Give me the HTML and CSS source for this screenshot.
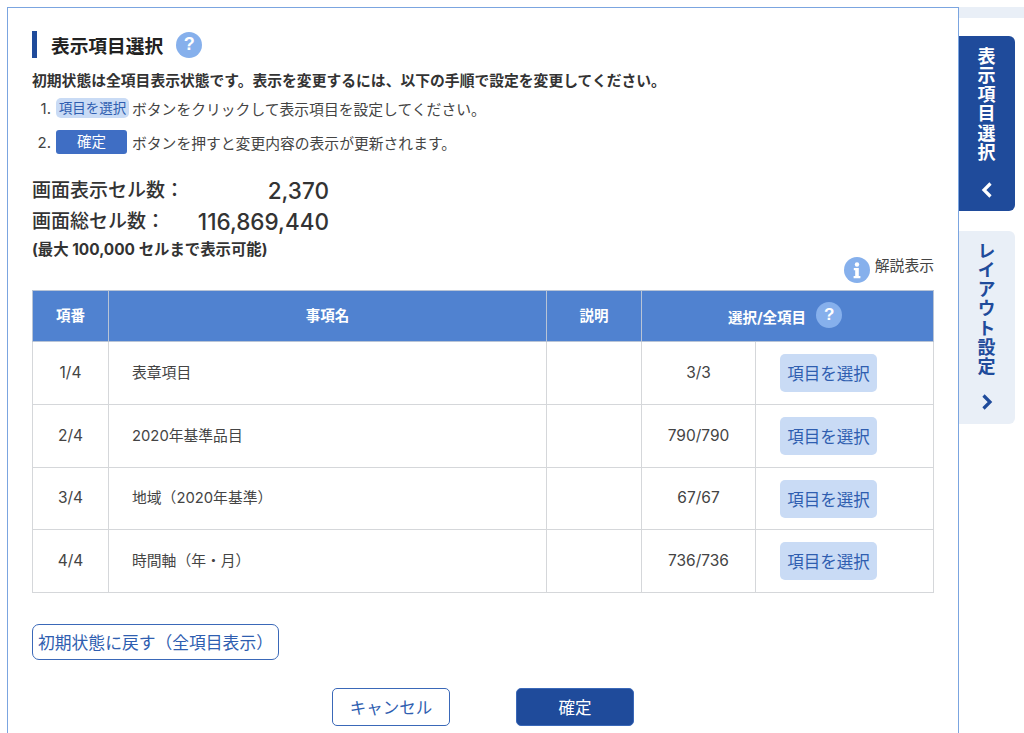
FILE: index.html
```html
<!DOCTYPE html>
<html lang="ja">
    <head>
        <meta charset="utf-8">
        <title>表示項目選択</title>
        <link rel="stylesheet" href="styles.css">
    </head>
    <body>
        <div class="page">
            <main class="panel">
                <div class="title-row">
                    <h1 class="title">表示項目選択</h1>
                    <span class="help help-big">?</span>
                </div>
                <p class="lead">初期状態は全項目表示状態です。表示を変更するには、以下の手順で設定を変更してください。</p>
                <div class="step step-one">
                    <span class="step-no">1.</span>
                    <span class="chip">項目を選択</span>
                    <span>ボタンをクリックして表示項目を設定してください。</span>
                </div>
                <div class="step step-two">
                    <span class="step-no">2.</span>
                    <span class="chip-dark">確定</span>
                    <span>ボタンを押すと変更内容の表示が更新されます。</span>
                </div>

                <div class="count-row count-first">
                    <span class="count-label">画面表示セル数：</span>
                    <span class="count-value">2,370</span>
                </div>
                <div class="count-row">
                    <span class="count-label">画面総セル数：</span>
                    <span class="count-value">116,869,440</span>
                </div>
                <p class="limit">(最大 100,000 セルまで表示可能)</p>

                <div class="guide">
                    <svg class="guide-icon" viewBox="0 0 26 26" width="26" height="26">
                        <circle cx="13" cy="13" r="13" fill="#86b0ec"/>
                        <circle cx="13" cy="7.500" r="2.200" fill="#fff"/>
                        <path d="M9.800 11h5v8h1.600v2.200H9.600V19h1.600v-5.800H9.800z" fill="#fff"/>
                    </svg>
                    <span class="guide-text">解説表示</span>
                </div>

                <table class="items">
                    <colgroup>
                        <col class="col-no">
                        <col class="col-name">
                        <col class="col-desc">
                        <col class="col-count">
                        <col class="col-btn">
                    </colgroup>
                    <thead>
                        <tr>
                            <th>項番</th>
                            <th>事項名</th>
                            <th>説明</th>
                            <th colspan="2">
                                <span class="th-inner">選択/全項目 <span class="help help-th">?</span></span>
                            </th>
                        </tr>
                    </thead>
                    <tbody>
                        <tr>
                            <td class="center">1/4</td>
                            <td class="name">表章項目</td>
                            <td></td>
                            <td class="center">3/3</td>
                            <td class="btn-cell"><button class="pick">項目を選択</button></td>
                        </tr>
                        <tr>
                            <td class="center">2/4</td>
                            <td class="name">2020年基準品目</td>
                            <td></td>
                            <td class="center">790/790</td>
                            <td class="btn-cell"><button class="pick">項目を選択</button></td>
                        </tr>
                        <tr class="row-short">
                            <td class="center">3/4</td>
                            <td class="name">地域（2020年基準）</td>
                            <td></td>
                            <td class="center">67/67</td>
                            <td class="btn-cell"><button class="pick">項目を選択</button></td>
                        </tr>
                        <tr>
                            <td class="center">4/4</td>
                            <td class="name">時間軸（年・月）</td>
                            <td></td>
                            <td class="center">736/736</td>
                            <td class="btn-cell"><button class="pick">項目を選択</button></td>
                        </tr>
                    </tbody>
                </table>

                <button class="reset">初期状態に戻す（全項目表示）</button>

                <div class="actions">
                    <button class="cancel">キャンセル</button>
                    <button class="ok">確定</button>
                </div>
            </main>

            <aside class="side">
                <div class="side-strip"></div>
                <div class="tab tab-on">
                    <span class="tab-text">表示項目選択</span>
                    <svg viewBox="0 0 14 18" width="14" height="18">
                        <path d="M10.500 2.500 4 9l6.500 6.500" fill="none" stroke="#fff" stroke-width="3.200"/>
                    </svg>
                </div>
                <div class="tab tab-off">
                    <span class="tab-text">レイアウト設定</span>
                    <svg viewBox="0 0 14 18" width="14" height="18">
                        <path d="M3.500 2.500 10 9l-6.500 6.500" fill="none" stroke="#1f4b9b" stroke-width="3.200"/>
                    </svg>
                </div>
            </aside>
        </div>
    </body>
</html>
```

FILE: styles.css
```css
html, body {
    margin: 0;
    height: 733px;
    overflow: hidden;
    background-color: #fff;
}

body {
    font-family: "Inter", "Noto Sans CJK JP", "Liberation Sans", sans-serif;
    color: #333;
    font-size: 14.8px;
}

.page {
    display: flex;
    align-items: flex-start;
    padding: 7px 0 0 7px;
}

button {
    font-family: inherit;
    cursor: pointer;
}

.panel {
    box-sizing: border-box;
    width: 952px;
    height: 760px;
    flex: none;
    padding: 23px 24px 0 24px;
    border: 1px solid #7ba5e0;
    border-bottom: none;
}

.title-row {
    display: flex;
    align-items: center;
    height: 27px;
}

.title {
    margin: 0;
    padding: 4px 0 0 14px;
    border-left: 5px solid #1f4b9b;
    font-size: 18.7px;
    line-height: 23px;
    font-weight: 700;
    color: #222;
}

.help {
    display: flex;
    align-items: center;
    justify-content: center;
    border-radius: 50%;
    background-color: #86b0ec;
    color: #fff;
    font-family: "Liberation Sans", sans-serif;
    font-weight: 700;
}

.help-big {
    width: 26px;
    height: 26px;
    margin-left: 13px;
    font-size: 18px;
}

.lead {
    margin: 13px 0 0 0;
    font-size: 14.8px;
    line-height: 20px;
    font-weight: 700;
    color: #333;
}

.step {
    display: flex;
    align-items: center;
    color: #444;
}

.step-one {
    margin-top: 7px;
    height: 20px;
}

.step-two {
    margin-top: 12px;
    height: 24px;
}

.step-no {
    box-sizing: border-box;
    width: 24px;
    padding-right: 5px;
    text-align: right;
    font-size: 15px;
}

.chip {
    box-sizing: border-box;
    width: 73px;
    height: 20px;
    margin-right: 3px;
    border-radius: 5px;
    background-color: #c9dbf5;
    color: #2f5eb0;
    font-size: 13.500px;
    line-height: 20px;
    text-align: center;
}

.chip-dark {
    box-sizing: border-box;
    width: 71px;
    height: 24px;
    margin-right: 5px;
    border-radius: 3px;
    background-color: #3f6ec4;
    color: #fff;
    font-size: 14.500px;
    line-height: 24px;
    text-align: center;
}

.count-row {
    display: flex;
    justify-content: space-between;
    width: 297px;
    font-size: 19px;
    line-height: 31px;
    font-weight: 500;
    color: #333;
}

.count-first {
    margin-top: 21px;
}

.count-value {
    font-size: 22.500px;
}

.limit {
    margin: 3px 0 0 0;
    font-size: 15.400px;
    line-height: 20px;
    font-weight: 700;
    color: #333;
}

.guide {
    display: flex;
    justify-content: flex-end;
    align-items: flex-start;
    gap: 5px;
    margin-top: -3px;
    height: 33px;
}

.guide-text {
    font-size: 14.800px;
    line-height: 18px;
    color: #444;
}

.items {
    width: 902px;
    table-layout: fixed;
    border-collapse: collapse;
}

.col-no { width: 76px; }
.col-name { width: 438px; }
.col-desc { width: 95px; }
.col-count { width: 114px; }
.col-btn { width: 178px; }

.items th, .items td {
    border: 1px solid #d5d7da;
    padding: 0;
}

.items th {
    height: 46px;
    background-color: #5082d0;
    color: #fff;
    font-size: 14.500px;
    font-weight: 700;
    border-color: #b8c4d6;
    padding-bottom: 4px;
}

.items td {
    box-sizing: border-box;
    height: 63px;
    font-size: 15.500px;
    color: #444;
}

.items .row-short td {
    height: 62px;
}

.th-inner {
    display: inline-flex;
    align-items: center;
    gap: 10px;
    margin-left: -5px;
    padding-top: 5px;
}

.help-th {
    width: 26px;
    height: 26px;
    font-size: 17px;
    margin-top: -3px;
}

.items .center {
    text-align: center;
    padding-bottom: 2px;
}

.items .name {
    padding: 0 0 4px 23px;
    font-size: 14.800px;
}

.items .btn-cell {
    padding-left: 24px;
}

.pick {
    display: block;
    width: 97px;
    height: 38px;
    border: none;
    border-radius: 5px;
    background-color: #c9dbf5;
    color: #2f5eb0;
    font-size: 16.500px;
    padding: 0;
}

.reset {
    display: block;
    width: 247px;
    height: 36px;
    margin-top: 31px;
    padding: 0;
    border: 1px solid #3a68b8;
    border-radius: 7px;
    background-color: #fff;
    color: #2f5eb0;
    font-size: 16.800px;
    white-space: nowrap;
}

.actions {
    display: flex;
    justify-content: center;
    gap: 66px;
    margin: 28px 0 0 0;
}

.cancel, .ok {
    width: 118px;
    height: 38px;
    padding: 0;
    border-radius: 5px;
    font-size: 16.500px;
}

.cancel {
    border: 1px solid #3a68b8;
    background-color: #fff;
    color: #2f5eb0;
}

.ok {
    border: 1px solid #3a68b8;
    background-color: #1f4b9b;
    color: #fff;
}

.side {
    flex: 1;
    display: flex;
    flex-direction: column;
}

.side-strip {
    height: 11px;
    background-color: #e9eff7;
}

.tab {
    box-sizing: border-box;
    width: 56px;
    border-radius: 0 6px 6px 0;
    display: flex;
    flex-direction: column;
    align-items: center;
}

.tab-text {
    writing-mode: vertical-rl;
    text-orientation: upright;
    font-size: 18px;
    line-height: 22px;
    font-weight: 700;
    letter-spacing: 1.200px;
    margin-right: 5px;
}

.tab-on {
    height: 175px;
    margin-top: 18px;
    padding-top: 11px;
    background-color: #1f4b9b;
    color: #fff;
    gap: 19px;
}

.tab-off {
    height: 193px;
    margin-top: 20px;
    padding-top: 11px;
    background-color: #e9eff7;
    color: #1f4b9b;
    gap: 17px;
}
```
